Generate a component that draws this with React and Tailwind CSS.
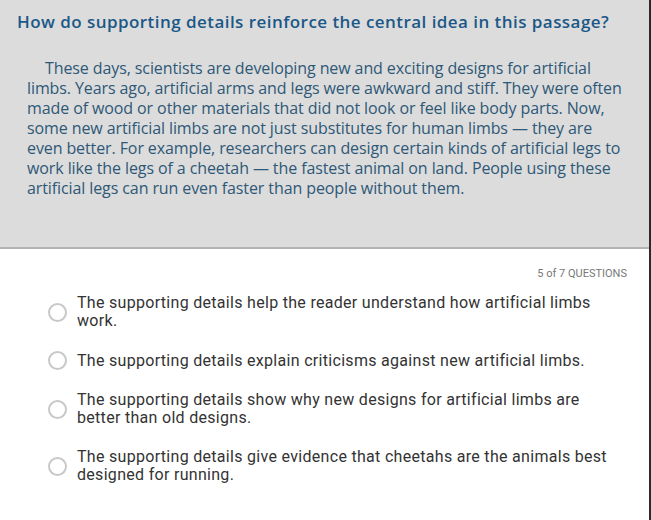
export default function App() {
  const options = [
    "The supporting details help the reader understand how artificial limbs work.",
    "The supporting details explain criticisms against new artificial limbs.",
    "The supporting details show why new designs for artificial limbs are better than old designs.",
    "The supporting details give evidence that cheetahs are the animals best designed for running.",
  ];
  return (
    <div className="w-[651px] h-[520px] bg-white border-r-2 border-[#2a2a2a] overflow-hidden">
      <div className="h-[249px] bg-[#dcdcdc] border-b-2 border-[#b3b3b3] pl-[17px] pr-[20px] pt-[10px]">
        <h1 className="text-[17px] leading-[24px] font-semibold text-[#1b5887] font-['Open_Sans',sans-serif] tracking-[0.45px]">
          How do supporting details reinforce the central idea in this passage?
        </h1>
        <p className="mt-[24px] pl-[10px] pr-[6px] text-[16px] leading-[20px] text-[#2e5877] font-['Open_Sans',sans-serif] indent-[18px] tracking-[-0.1px]">
          These days, scientists are developing new and exciting designs for artificial limbs. Years ago, artificial arms and legs were awkward and stiff. They were often made of wood or other materials that did not look or feel like body parts. Now, some new artificial limbs are not just substitutes for human limbs — they are even better. For example, researchers can design certain kinds of artificial legs to work like the legs of a cheetah — the fastest animal on land. People using these artificial legs can run even faster than people without them.
        </p>
      </div>
      <div className="pt-[18px] pr-[22px] text-right text-[11px] leading-[14px] text-[#777] font-['Roboto',sans-serif]">
        5 of 7 QUESTIONS
      </div>
      <div className="flex flex-col gap-[21px] pt-[13px] pl-[48px] pr-[30px]">
        {options.map((o, i) => (
          <div key={i} className="flex items-center gap-[10px]">
            <div className="w-[19px] h-[19px] rounded-full border-2 border-[#c8c8c8] shrink-0 bg-white" />
            <div className="text-[16px] leading-[18px] text-[#333] font-['Roboto',sans-serif] tracking-[0.3px]">{o}</div>
          </div>
        ))}
      </div>
    </div>
  );
}
